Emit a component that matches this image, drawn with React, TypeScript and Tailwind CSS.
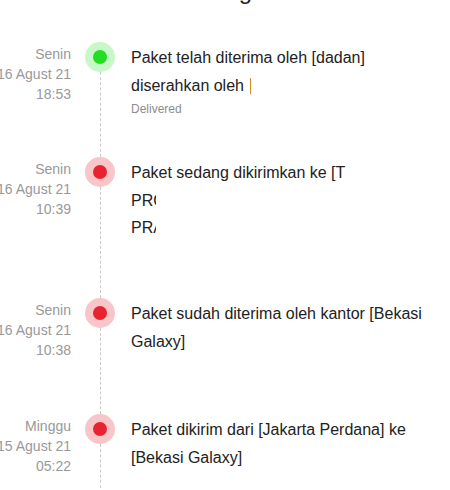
import React from 'react'

type Step = {
  day: string
  date: string
  time: string
  done?: boolean
  h: string
  body: React.ReactNode
}

const steps: Step[] = [
  {
    day: 'Senin',
    date: '16 Agust 21',
    time: '18:53',
    done: true,
    h: 'h-[115px]',
    body: (
      <>
        <p>
          Paket telah diterima oleh [dadan] diserahkan oleh{' '}
          <span className="ml-[2px] inline-block h-[16px] w-px translate-y-[3px] bg-[#d4892c]" />
        </p>
        <p className="mt-[2px] text-[12px] leading-[16px] text-[#8c8c8c]">Delivered</p>
      </>
    ),
  },
  {
    day: 'Senin',
    date: '16 Agust 21',
    time: '10:39',
    h: 'h-[141px]',
    body: (
      <>
        <p>Paket sedang dikirimkan ke [T</p>
        <p>
          <span className="inline-block w-[25px] overflow-hidden whitespace-nowrap align-top">PROSES</span>
        </p>
        <p>
          <span className="inline-block w-[25px] overflow-hidden whitespace-nowrap align-top">PRABUMULIH</span>
        </p>
      </>
    ),
  },
  {
    day: 'Senin',
    date: '16 Agust 21',
    time: '10:38',
    h: 'h-[116px]',
    body: <p>Paket sudah diterima oleh kantor [Bekasi Galaxy]</p>,
  },
  {
    day: 'Minggu',
    date: '15 Agust 21',
    time: '05:22',
    h: 'h-[120px]',
    body: <p>Paket dikirim dari [Jakarta Perdana] ke [Bekasi Galaxy]</p>,
  },
]

export default function App() {
  return (
    <div className="h-[490px] w-[450px] overflow-hidden bg-white font-['Liberation_Sans',Arial,sans-serif]">
      {/* title, scrolled mostly out of view */}
      <h2 className="-mt-[23px] h-[28px] pl-[161px] text-[24px] leading-[28px] text-[#222]">Tracking</h2>

      <div className="mt-[37px]">
        {steps.map((s, i) => (
          <div key={i} className={`flex ${s.h}`}>
            <div className="-ml-[20px] mt-[2px] w-[91px] whitespace-nowrap text-right text-[14px] leading-[20px] text-[#999]">
              <div>{s.day}</div>
              <div>{s.date}</div>
              <div>{s.time}</div>
            </div>

            <div className="ml-[14px] flex w-[30px] flex-col items-center">
              <div
                className={`flex h-[30px] w-[30px] shrink-0 items-center justify-center rounded-full ${
                  s.done ? 'bg-[#c8f7c8]' : 'bg-[#f8c6c9]'
                }`}
              >
                <div className={`h-[14px] w-[14px] rounded-full ${s.done ? 'bg-[#22dd22]' : 'bg-[#e8222e]'}`} />
              </div>
              <div className="w-0 flex-1 border-l border-dashed border-[#c8c8c8]" />
            </div>

            <div className="ml-[16px] mt-[2px] w-[305px] text-[16px] leading-[27.5px] text-[#222]">{s.body}</div>
          </div>
        ))}
      </div>
    </div>
  )
}
